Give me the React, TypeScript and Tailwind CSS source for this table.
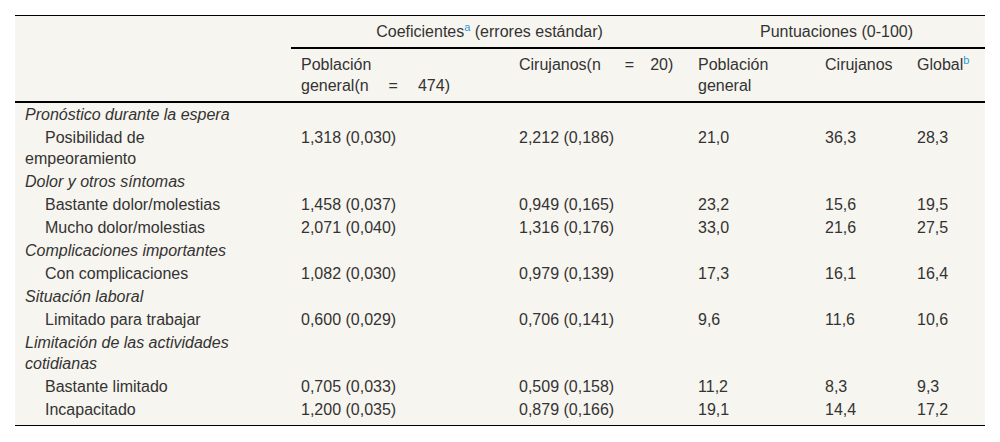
import React from "react";

type Row = {
  label: string;
  group?: boolean;
  vals?: string[];
};

const rows: Row[] = [
  { label: "Pronóstico durante la espera", group: true },
  { label: "Posibilidad de empeoramiento", vals: ["1,318 (0,030)", "2,212 (0,186)", "21,0", "36,3", "28,3"] },
  { label: "Dolor y otros síntomas", group: true },
  { label: "Bastante dolor/molestias", vals: ["1,458 (0,037)", "0,949 (0,165)", "23,2", "15,6", "19,5"] },
  { label: "Mucho dolor/molestias", vals: ["2,071 (0,040)", "1,316 (0,176)", "33,0", "21,6", "27,5"] },
  { label: "Complicaciones importantes", group: true },
  { label: "Con complicaciones", vals: ["1,082 (0,030)", "0,979 (0,139)", "17,3", "16,1", "16,4"] },
  { label: "Situación laboral", group: true },
  { label: "Limitado para trabajar", vals: ["0,600 (0,029)", "0,706 (0,141)", "9,6", "11,6", "10,6"] },
  { label: "Limitación de las actividades cotidianas", group: true },
  { label: "Bastante limitado", vals: ["0,705 (0,033)", "0,509 (0,158)", "11,2", "8,3", "9,3"] },
  { label: "Incapacitado", vals: ["1,200 (0,035)", "0,879 (0,166)", "19,1", "14,4", "17,2"] },
];

function Sup({ children }: { children: React.ReactNode }) {
  return <sup className="text-[11px] text-[#2f96d8] -top-[6px]">{children}</sup>;
}

export default function App() {
  return (
    <div className="min-h-screen bg-white px-[15px] pt-[15px] font-['Liberation_Sans',Arial,sans-serif] text-[16px] leading-[21px] text-[#333]">
      <table className="w-[970px] table-fixed border-collapse bg-[#f7f5ef]">
        <colgroup>
          <col className="w-[276px]" />
          <col className="w-[218px]" />
          <col className="w-[179px]" />
          <col className="w-[127px]" />
          <col className="w-[92px]" />
          <col className="w-[78px]" />
        </colgroup>
        <thead>
          <tr className="border-t border-black">
            <th className="px-[10px] pt-[5px] pb-[5px]" />
            <th colSpan={2} className="border-b-2 border-black px-[10px] pt-[5px] pb-[5px] text-center font-normal">
              Coeficientes<Sup>a</Sup> (errores estándar)
            </th>
            <th colSpan={3} className="border-b-2 border-black px-[10px] pt-[5px] pb-[5px] text-center font-normal">
              Puntuaciones (0-100)
            </th>
          </tr>
          <tr className="border-b-2 border-black">
            <th className="px-[10px] pt-[5px] pb-[5px]" />
            <th className="px-[10px] pt-[5px] pb-[5px] text-left align-top font-normal">
              Población
              <br />
              general(n<span className="mx-[20px]">=</span>474)
            </th>
            <th className="px-[10px] pt-[5px] pb-[5px] text-left align-top font-normal whitespace-nowrap">
              Cirujanos(n<span className="ml-[24px] mr-[16px]">=</span>20)
            </th>
            <th className="px-[10px] pt-[5px] pb-[5px] text-left align-top font-normal">
              Población general
            </th>
            <th className="px-[10px] pt-[5px] pb-[5px] text-left align-top font-normal">Cirujanos</th>
            <th className="px-[10px] pt-[5px] pb-[5px] text-left align-top font-normal">
              Global<Sup>b</Sup>
            </th>
          </tr>
        </thead>
        <tbody className="border-b border-black">
          {rows.map((r, i) => {
            const last = i === rows.length - 1;
            const pad = last ? "pt-px pb-[5px]" : "py-px";
            if (r.group) {
              return (
                <tr key={i}>
                  <td className={`pl-[10px] pr-[40px] ${pad} italic align-top`}>{r.label}</td>
                  <td colSpan={5} />
                </tr>
              );
            }
            return (
              <tr key={i}>
                <td className={`pl-[10px] pr-[40px] ${pad} indent-[20px] align-top`}>{r.label}</td>
                {r.vals!.map((v, j) => (
                  <td key={j} className={`px-[10px] ${pad} align-top`}>
                    {v}
                  </td>
                ))}
              </tr>
            );
          })}
        </tbody>
      </table>
    </div>
  );
}
